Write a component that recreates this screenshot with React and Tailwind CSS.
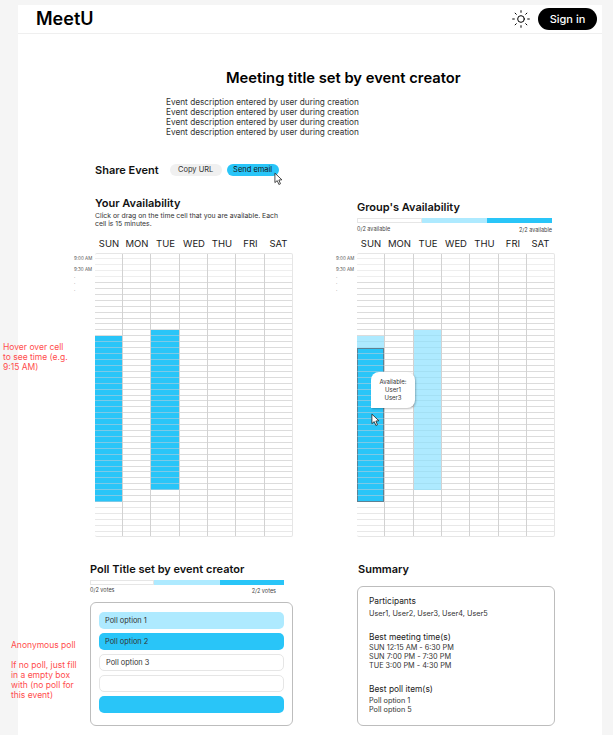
import React from 'react';
import { Sun } from 'lucide-react';

const DAYS = ['SUN', 'MON', 'TUE', 'WED', 'THU', 'FRI', 'SAT'];
const ROW_COUNT = 48;

// Pointer cursor from the mockup
function Cursor({ className }) {
  return (
    <svg viewBox="0 0 10 15" className={className}>
      <path d="M1 1 L1 11.5 L3.6 9.3 L5.4 13.6 L7.2 12.8 L5.4 8.6 L8.8 8.4 Z" fill="#fff" stroke="#222" strokeWidth="0.9" strokeLinejoin="round" />
    </svg>
  );
}

/* Row line colour changes over the grid: soft at the top and bottom */
function lineClass(row) {
  if (row < 4) return 'border-b-[#eeeeee]';
  if (row > 41) return 'border-b-[#e8e8e8]';
  return 'border-b-[#dcdcdc]';
}

function Cell({ row, kind, first, last }) {
  const height = row === 0 ? 'h-[5.3px]' : 'h-[5.936px]';
  if (kind === 'solid') {
    return <div className={`${height} shrink-0 bg-[#29c5f8] border-b border-b-[#7cc9e6]`} />;
  }
  if (kind === 'outlined') {
    return (
      <div className={`${height} shrink-0 bg-[#29c5f8] border-x border-x-[#5e8193] border-b ${last ? 'border-b-[#5e8193]' : 'border-b-[#7cc9e6]'} ${first ? 'border-t border-t-[#5e8193]' : ''}`} />
    );
  }
  if (kind === 'light') {
    return <div className={`${height} shrink-0 bg-[#aeeaff] border-b border-b-[#a4e0f4]`} />;
  }
  return <div className={`${height} shrink-0 border-b ${lineClass(row)}`} />;
}

function TimeGrid({ widths, fills }) {
  return (
    <div className="flex">
      <div className="w-[21px] shrink-0 pt-[1px] text-[4.5px] leading-[7px] text-[#555]">
        <div className="h-[11px] pt-[1px]">9:00 AM</div>
        <div className="h-[7px] pt-[1px]">9:30 AM</div>
        <div className="h-[7px] pt-[1px]">.</div>
        <div className="h-[7px]">.</div>
        <div className="h-[7px]">.</div>
      </div>
      <div className="flex h-[284px] overflow-hidden rounded-[2px] border-b border-r border-t border-[#e6e6e6]">
        {widths.map((w, col) => (
          <div key={col} className={`${w} shrink-0 ${col < 6 ? 'border-r border-r-[#d2d2d2]' : ''}`}>
            {Array.from({ length: ROW_COUNT }, (_, row) => {
              const f = fills[col];
              const kind = f && f.find((r) => row >= r.from && row <= r.to);
              return (
                <Cell
                  key={row}
                  row={row}
                  kind={kind ? kind.kind : null}
                  first={kind && row === kind.from}
                  last={kind && row === kind.to}
                />
              );
            })}
          </div>
        ))}
      </div>
    </div>
  );
}

function DayHeader({ widths }) {
  return (
    <div className="ml-[21px] flex text-[9.5px] leading-[12px] text-[#1a1a1a]">
      {widths.map((w, i) => (
        <div key={DAYS[i]} className={`${w} shrink-0 text-center`}>{DAYS[i]}</div>
      ))}
    </div>
  );
}

function ScaleBar() {
  return (
    <div className="flex h-[5px] w-[195px]">
      <div className="w-[65px] border border-[#e6e6e6] bg-white" />
      <div className="w-[65px] bg-[#aeeaff]" />
      <div className="w-[65px] bg-[#29c5f8]" />
    </div>
  );
}

function PollOption({ className, children }) {
  return (
    <div className={`flex h-[17px] items-center rounded-[5px] px-[6px] text-[7.4px] text-[#333] ${className}`}>
      {children}
    </div>
  );
}

const LEFT_WIDTHS = ['w-[28px]', 'w-[28px]', 'w-[29px]', 'w-[28px]', 'w-[28px]', 'w-[29px]', 'w-[27px]'];
const RIGHT_WIDTHS = ['w-[28px]', 'w-[29px]', 'w-[28px]', 'w-[28px]', 'w-[29px]', 'w-[28px]', 'w-[27px]'];

const YOUR_FILLS = {
  0: [{ from: 14, to: 41, kind: 'solid' }],
  2: [{ from: 13, to: 39, kind: 'solid' }],
};
const GROUP_FILLS = {
  0: [
    { from: 14, to: 15, kind: 'light' },
    { from: 16, to: 41, kind: 'outlined' },
  ],
  2: [{ from: 13, to: 39, kind: 'light' }],
};

export default function App() {
  return (
    <div className="relative h-[735px] w-[613px] overflow-hidden bg-[#f5f5f5]" style={{ fontFamily: 'Inter, sans-serif' }}>
      {/* Frame label, cut off by the top of the window */}
      <div className="ml-[18px] h-[5px] overflow-hidden">
        <div className="-mt-[8px] text-[9px] leading-[10px] text-[#9a9a9a]">Select Time and Location</div>
      </div>

      <div className="ml-[18px] h-[730px] w-[584px] bg-white">
        {/* Header */}
        <header className="flex h-[29px] items-center border-b border-[#efefef] pl-[18px] pr-[5px]">
          <div className="text-[18px] font-semibold leading-none text-black">MeetU</div>
          <Sun className="ml-auto h-[20px] w-[20px] text-black" strokeWidth={1.2} />
          <button className="ml-[7px] flex h-[22px] w-[59px] items-center justify-center rounded-full bg-black text-[11px] font-medium text-white">
            Sign in
          </button>
        </header>

        <h1 className="mt-[35px] ml-[208px] text-[14.75px] font-semibold leading-[18px] text-black">
          Meeting title set by event creator
        </h1>

        <div className="mt-[10px] ml-[148px] text-[8.25px] leading-[10px] text-[#333]">
          <p>Event description entered by user during creation</p>
          <p>Event description entered by user during creation</p>
          <p>Event description entered by user during creation</p>
          <p>Event description entered by user during creation</p>
        </div>

        {/* Share */}
        <div className="mt-[26px] ml-[77px] flex items-center">
          <div className="text-[11px] font-semibold leading-[14px] text-[#111]">Share Event</div>
          <div className="ml-[11px] flex h-[12px] w-[52px] items-center justify-center rounded-full bg-[#f0f0f0] text-[7.5px] text-[#333]">Copy URL</div>
          <div className="relative ml-[5px] flex h-[12px] w-[52px] items-center justify-center rounded-full bg-[#29c5f8] text-[7.5px] text-[#111]">
            Send email
            <Cursor className="absolute left-[47px] top-[8px] h-[14px] w-[9px]" />
          </div>
        </div>

        {/* Availability grids */}
        <div className="relative mt-[19px] ml-[56px] flex">
          <div className="w-[262px]">
            <div className="ml-[21px] h-[40px]">
              <h2 className="text-[11px] font-semibold leading-[14px] text-[#111]">Your Availability</h2>
              <p className="mt-[2px] w-[190px] text-[6.85px] leading-[8px] text-[#333]">
                Click or drag on the time cell that you are available. Each cell is 15 minutes.
              </p>
            </div>
            <div className="mt-[2px]"><DayHeader widths={LEFT_WIDTHS} /></div>
            <div className="mt-[3px]"><TimeGrid widths={LEFT_WIDTHS} fills={YOUR_FILLS} /></div>
          </div>

          <div className="relative w-[240px]">
            <div className="ml-[21px] h-[40px] pt-[4px]">
              <h2 className="text-[11px] font-semibold leading-[14px] text-[#111]">Group's Availability</h2>
              <div className="mt-[4px]"><ScaleBar /></div>
              <div className="mt-[3px] flex w-[195px] justify-between text-[5.5px] leading-[7px] text-[#444]">
                <span>0/2 available</span>
                <span className="mt-[1px]">2/2 available</span>
              </div>
            </div>
            <div className="mt-[2px]"><DayHeader widths={RIGHT_WIDTHS} /></div>
            <div className="mt-[3px]"><TimeGrid widths={RIGHT_WIDTHS} fills={GROUP_FILLS} /></div>

            {/* Tooltip on hover */}
            <div className="absolute left-[35px] top-[176px] flex h-[36px] w-[44px] flex-col items-center justify-center rounded-[8px] rounded-bl-none bg-white text-[6px] leading-[8px] text-[#333] shadow-[1px_1px_2px_rgba(0,0,0,0.25)]">
              <span>Available:</span>
              <span>User1</span>
              <span>User3</span>
            </div>
            <Cursor className="absolute left-[35px] top-[217px] h-[14px] w-[9px]" />
          </div>
        </div>

        {/* Poll and summary */}
        <div className="mt-[25px] ml-[72px] flex">
          <div className="w-[267px]">
            <h2 className="text-[11px] font-semibold leading-[14px] text-[#111]">Poll Title set by event creator</h2>
            <div className="mt-[4px] flex h-[5px] w-[194px]">
              <div className="w-[64px] border border-[#e6e6e6] bg-white" />
              <div className="w-[66px] bg-[#aeeaff]" />
              <div className="w-[64px] bg-[#29c5f8]" />
            </div>
            <div className="mt-[2px] flex w-[186px] justify-between text-[5.5px] leading-[7px] text-[#444]">
              <span>0/2 votes</span>
              <span className="mt-[1px]">2/2 votes</span>
            </div>
            <div className="mt-[7px] flex h-[124px] w-[203px] flex-col gap-[4px] rounded-[6px] border border-[#bdbdbd] px-[8px] pt-[9px]">
              <PollOption className="bg-[#aeeaff]">Poll option 1</PollOption>
              <PollOption className="bg-[#29c5f8] text-[#123]">Poll option 2</PollOption>
              <PollOption className="border border-[#e6e6e6]">Poll option 3</PollOption>
              <PollOption className="border border-[#e6e6e6]"></PollOption>
              <PollOption className="bg-[#29c5f8]"></PollOption>
            </div>
          </div>

          <div>
            <h2 className="ml-[1px] text-[11px] font-semibold leading-[14px] text-[#111]">Summary</h2>
            <div className="mt-[10px] h-[140px] w-[198px] rounded-[6px] border border-[#bdbdbd] pl-[11px] pt-[8px] text-[#333]">
              <div className="text-[8.4px] leading-[12px] text-[#222]">Participants</div>
              <div className="mt-[2px] text-[7.3px] leading-[10px]">User1, User2, User3, User4, User5</div>
              <div className="mt-[12px] text-[8.4px] leading-[12px] text-[#222]">Best meeting time(s)</div>
              <div className="text-[7.3px] leading-[9px]">
                <p>SUN 12:15 AM - 6:30 PM</p>
                <p>SUN 7:00 PM - 7:30 PM</p>
                <p>TUE 3:00 PM - 4:30 PM</p>
              </div>
              <div className="mt-[13px] text-[8.4px] leading-[12px] text-[#222]">Best poll item(s)</div>
              <div className="mt-[1px] text-[7.3px] leading-[9px]">
                <p>Poll option 1</p>
                <p>Poll option 5</p>
              </div>
            </div>
          </div>
        </div>
      </div>

      {/* Red notes beside the frame */}
      <div className="absolute left-[3px] top-[342px] text-[8.5px] leading-[10px] text-[#ff4d4d]">
        <p>Hover over cell</p>
        <p>to see time (e.g.</p>
        <p>9:15 AM)</p>
      </div>
      <div className="absolute left-[11px] top-[640px] text-[8.5px] leading-[10px] text-[#ff4d4d]">
        <p>Anonymous poll</p>
        <p className="mt-[10px]">If no poll, just fill</p>
        <p>in a empty box</p>
        <p>with (no poll for</p>
        <p>this event)</p>
      </div>
    </div>
  );
}
